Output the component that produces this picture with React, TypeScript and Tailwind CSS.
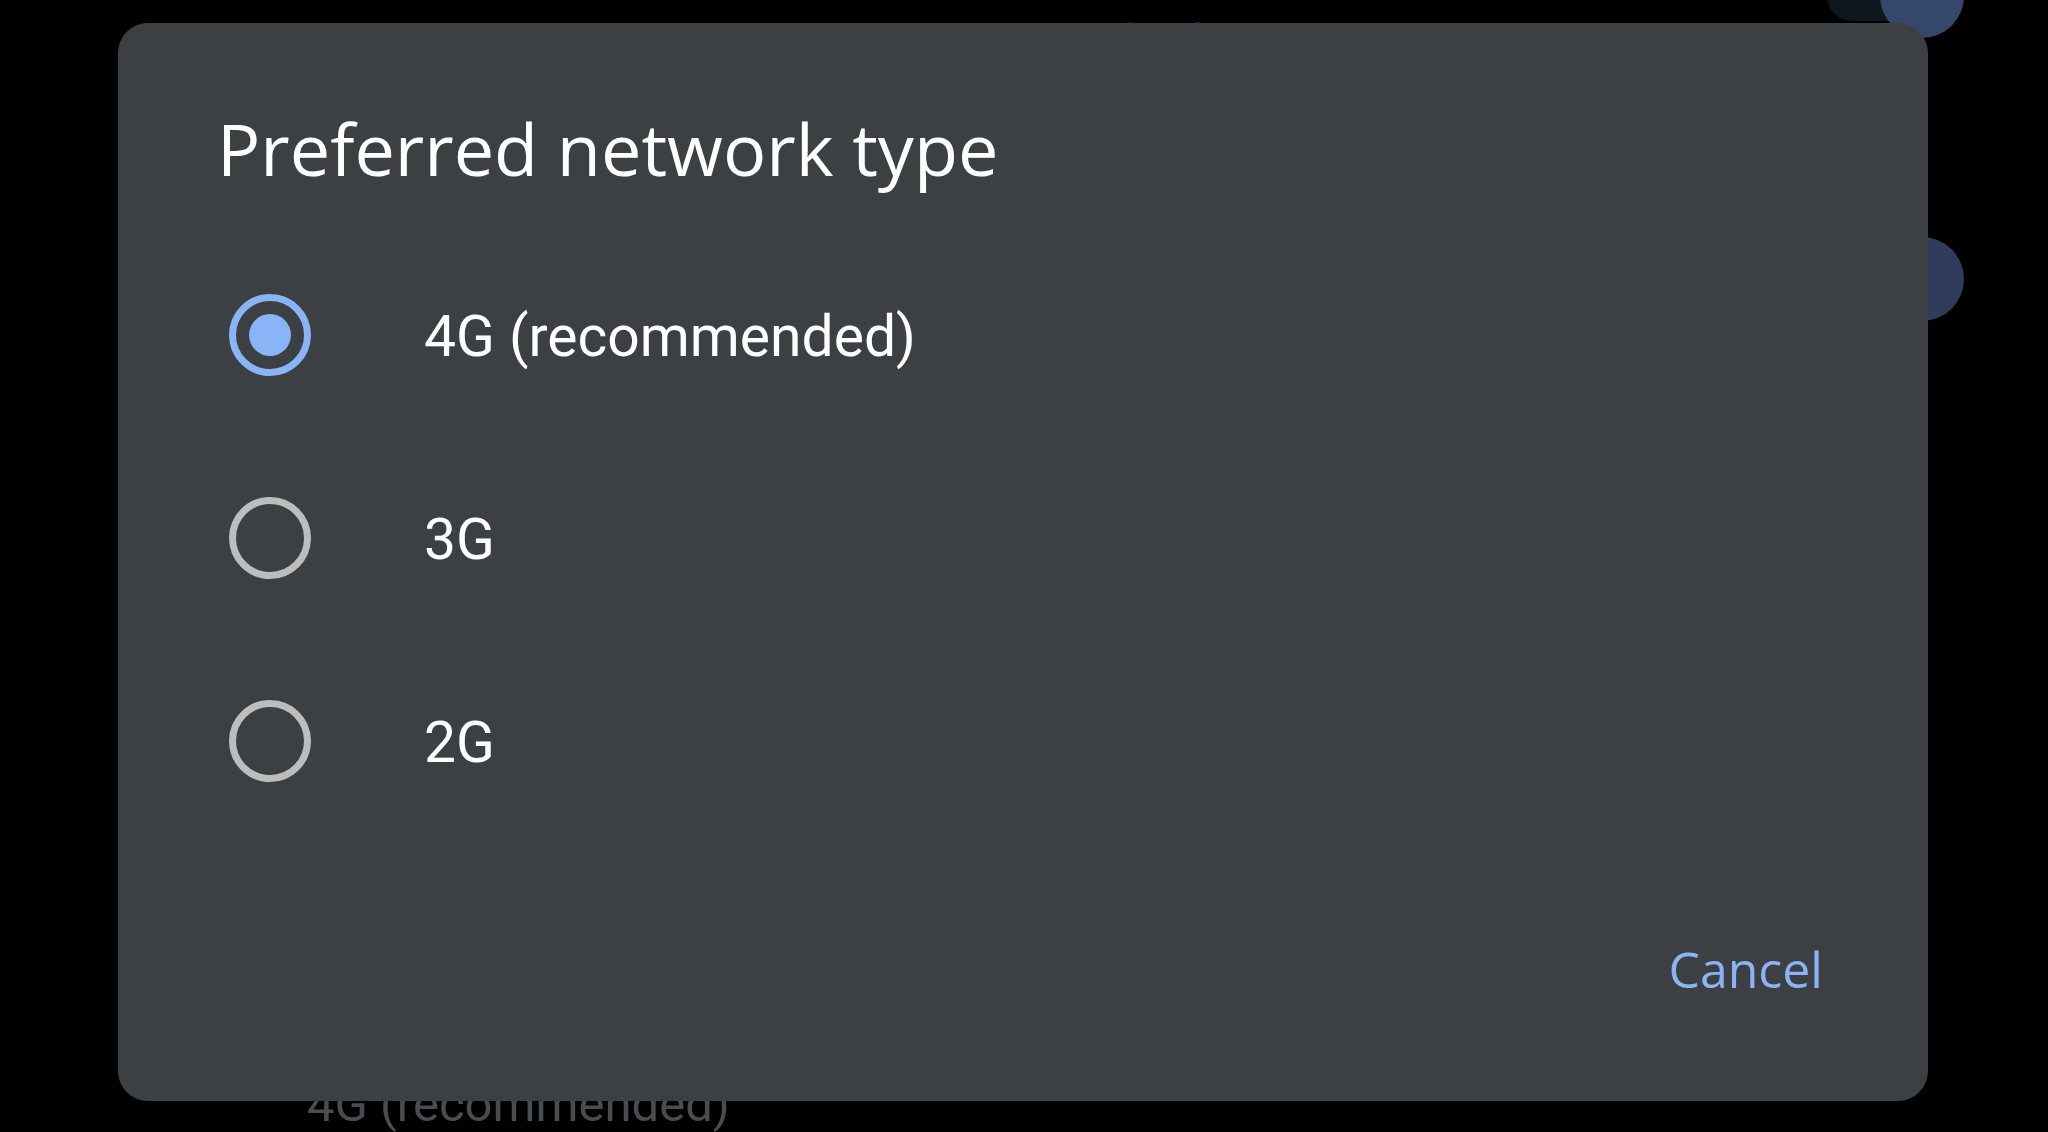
import { useState } from "react";

const NETWORK_OPTIONS = ["4G (recommended)", "3G", "2G"];

function Switch({ thumbClass }: { thumbClass: string }) {
  return (
    <div className="relative h-[84px] w-[137px] shrink-0">
      <div className="absolute left-0 top-[17px] h-[50px] w-[128px] rounded-full bg-[#10161d]" />
      <div className={`absolute right-0 top-0 h-[84px] w-[84px] rounded-full ${thumbClass}`} />
    </div>
  );
}

function SettingRow({
  title,
  summary,
  thumbClass,
  thumbOffset = "mt-[21px]",
  className,
}: {
  title?: string;
  summary?: string;
  thumbClass?: string;
  thumbOffset?: string;
  className: string;
}) {
  return (
    <div className={`flex h-[140px] items-start justify-between pl-[307px] pr-[84px] ${className}`}>
      <div className="flex flex-col font-['Roboto',sans-serif]">
        <span className="h-[70px] text-[56px] leading-[70px] text-[#6a6d70]">{title}</span>
        <span className="h-[70px] text-[49px] leading-[70px] text-[#4a4d50]">{summary}</span>
      </div>
      {thumbClass ? (
        <div className={thumbOffset}>
          <Switch thumbClass={thumbClass} />
        </div>
      ) : null}
    </div>
  );
}

function Radio({ checked }: { checked: boolean }) {
  return (
    <span
      className={`flex h-[82px] w-[82px] shrink-0 items-center justify-center rounded-full border-[7px] ${
        checked ? "border-[#8ab4f8]" : "border-[#bdbdbd]"
      }`}
    >
      {checked ? <span className="h-[42px] w-[42px] rounded-full bg-[#8ab4f8]" /> : null}
    </span>
  );
}

export default function App() {
  const [selected, setSelected] = useState(0);

  return (
    <div className="relative h-[1132px] w-[2048px] overflow-hidden bg-black">
      {/* settings list behind the scrim */}
      <div className="flex flex-col">
        <SettingRow
          className="-mt-[62px]"
          thumbOffset="mt-[16px]"
          summary="Use LTE services to improve voice and other communications"
          thumbClass="bg-[#35486c]"
        />
        <SettingRow className="mt-[138px]" thumbClass="bg-[#2f3c5b]" />
        <SettingRow className="mt-[644px]" title="Preferred network type" summary="4G (recommended)" />
      </div>

      {/* dialog */}
      <div className="absolute left-[118px] top-[23px] flex h-[1078px] w-[1810px] flex-col rounded-[30px] bg-[#3c4043] pl-[99px] pr-[105px] pt-[89px]">
        <h2 className="font-['Open_Sans',sans-serif] text-[72px] font-normal leading-[72px] text-white">
          Preferred network type
        </h2>

        <div className="mt-[49px] flex flex-col">
          {NETWORK_OPTIONS.map((label, index) => (
            <button
              key={label}
              type="button"
              onClick={() => setSelected(index)}
              className="flex h-[203px] items-center text-left"
            >
              <span className="ml-[12px]">
                <Radio checked={selected === index} />
              </span>
              <span className="ml-[113px] pt-[4px] font-['Roboto',sans-serif] text-[57px] leading-[57px] text-white">
                {label}
              </span>
            </button>
          ))}
        </div>

        <div className="mt-[102px] flex justify-end">
          <button
            type="button"
            className="font-['Open_Sans',sans-serif] text-[50px] font-medium leading-[50px] text-[#8ab4f8]"
          >
            Cancel
          </button>
        </div>
      </div>
    </div>
  );
}
